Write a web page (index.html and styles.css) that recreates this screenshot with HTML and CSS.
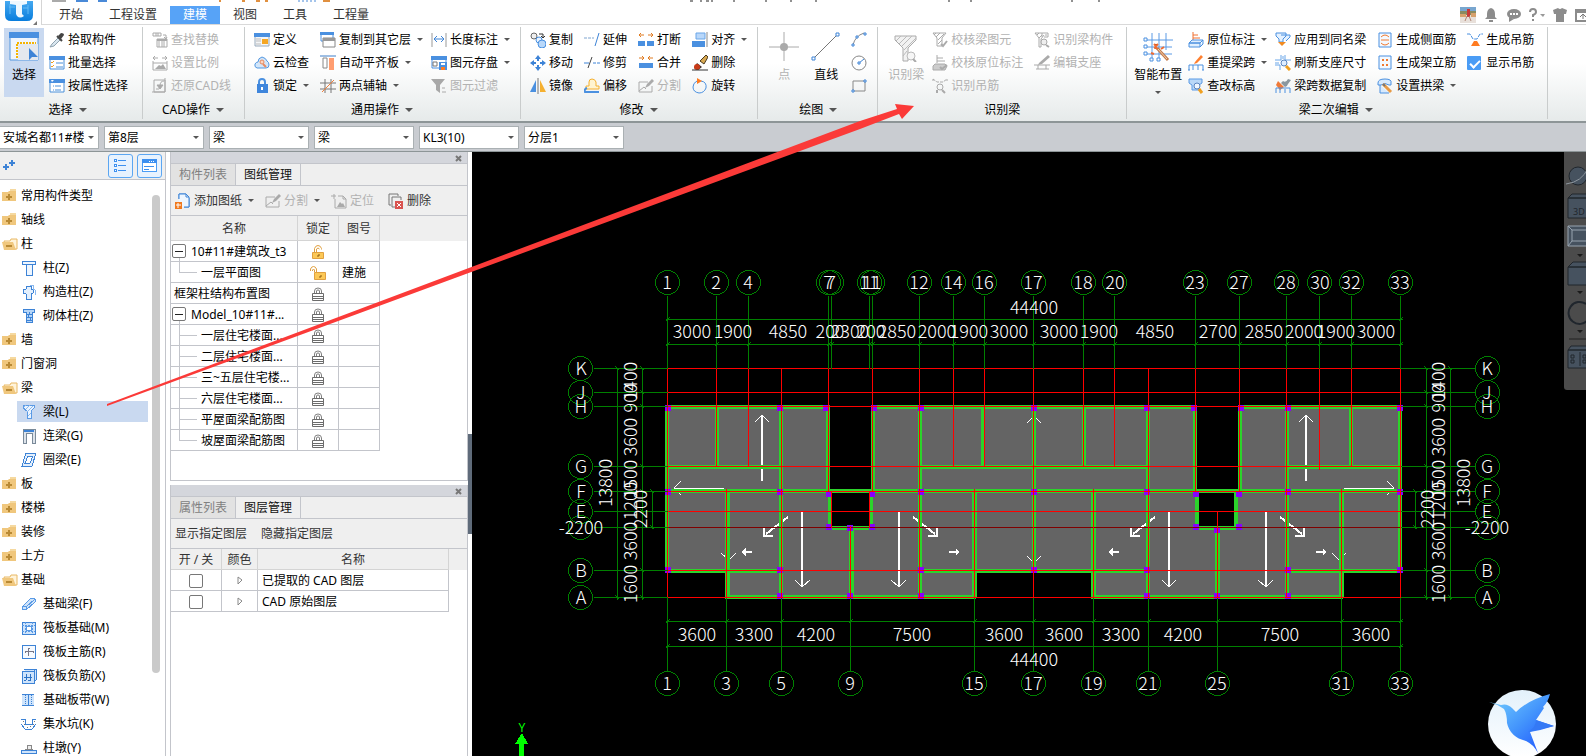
FILE: index.html
```html
<!DOCTYPE html>
<html lang="zh-CN">
<head>
    <meta charset="UTF-8">
    <meta name="viewport" content="width=device-width, initial-scale=1.0">
    <title>安城名都11#楼 - 建模</title>
    <link rel="stylesheet" href="styles.css">
</head>
<body>

<!-- 共用图标 -->
<svg class="symbols" aria-hidden="true">
    <symbol id="folder" viewBox="0 0 16 14">
        <path d="M8 0h6v2H8z" fill="#f5d9a0"/><path d="M0 3h6l1-1h7v10H0z" fill="#f0c77d"/>
        <path d="M7 5v6M4 8h6" stroke="#b98a35" stroke-width="2"/>
    </symbol>
    <symbol id="folder-open" viewBox="0 0 16 14">
        <path d="M2 4h6l1-2h6v10H4z" fill="#fff3d9" stroke="#e8b865"/><path d="M0 5h11l3 8H2z" fill="#f0c77d"/>
        <path d="M4 9h6" stroke="#b98a35" stroke-width="2"/>
    </symbol>
    <symbol id="lock" viewBox="0 0 12 14">
        <path d="M2.5 6V4q0-3 3.5-3t3.5 3v2M4.5 6V4q0-1 1.5-1t1.5 1v2" fill="none" stroke="#808080"/>
        <path d="M.5 6.500h11v7H.5zM1 9.500h10M1 11.500h10" fill="#fff" stroke="#6c6c6c"/>
    </symbol>
    <symbol id="unlock" viewBox="0 0 12 14">
        <path d="M2.500 7V3.500q1-3 3.500-3t3.500 3v1M4.500 7V4q1.500-2 3 0" fill="none" stroke="#e0a040"/>
        <path d="M.5 7.500h11v6H.5z" fill="#fcc856" stroke="#e0a040"/><path d="M7 9v2H5" fill="none" stroke="#8a5a10"/>
    </symbol>
    <symbol id="unlock-open" viewBox="0 0 16 14">
        <path d="M.5 5V3q1-2.500 3-2.500T6.500 3v4M2.500 5V4q1-2 2 0v2" fill="none" stroke="#e0a040"/>
        <path d="M4.500 6.500h11v7h-11z" fill="#fcc856" stroke="#e0a040"/><path d="M11 9v2H9" fill="none" stroke="#8a5a10"/>
    </symbol>
</svg>

<header class="titlebar">
    <button class="app-logo" aria-label="应用菜单">
        <svg width="37" height="24" viewBox="0 0 37 24">
            <defs><linearGradient id="logoFill" x2="0" y2="1"><stop stop-color="#46a9f0"/><stop offset="1" stop-color="#087ddd"/></linearGradient></defs>
            <path d="M5 0h28v14q0 6-6 6H11q-6 0-6-6z" fill="url(#logoFill)"/>
            <path d="M9 6h6M23 7h5M10 3v10M28 4v9" stroke="#63b9f4"/>
            <path d="M10 0h17v3l-5 1v9l2 2q-4 3-7 0l-1-2V4l-6-1z" fill="#eef8ff"/>
            <path d="M37 20v4h-4z" fill="#777"/>
        </svg>
    </button>
    <div class="titlebar-main">
        <svg class="quick-access" width="1060" height="2" viewBox="41 0 1060 2" aria-hidden="true">
            <path d="M51 1h14" stroke="#aaa" stroke-width="2"/>
            <path d="M75 1h12M97 1h9" stroke="#4a8ad8" stroke-width="2"/>
            <path d="M219 0v2M241 1h3M255 1h4M264 1h3M322 1h7" stroke="#e09040" stroke-width="2"/>
            <path d="M298 0v2M302 0v2M306 0v2M310 0v2M314 0v2" stroke="#4a8ad8"/>
            <path d="M689 1h3M699 1h2M705 1h3M711 0v2M733 0v2M765 0v2M790 0v2M815 0v2M947 1h2M970 0v2M1070 1h2M1097 1h2" stroke="#222"/>
        </svg>
        <nav class="tabs">
            <button>开始</button>
            <button>工程设置</button>
            <button class="active">建模</button>
            <button>视图</button>
            <button>工具</button>
            <button>工程量</button>
        </nav>
        <div class="user-tools">
            <svg width="126" height="18" viewBox="1460 5 126 18">
                <path d="M1460 6h16v16h-16z" fill="#e8e0da"/><path d="M1460 6h16v4h-16z" fill="#78a6cf"/><path d="M1460 10h16v4h-16z" fill="#8a8a5f"/>
                <path d="M1467 8h3v8h-3z" fill="#c93838"/><path d="M1460 13h6v3h-6zM1471 12h5v4h-5z" fill="#d7a16c"/><path d="M1467 15l-2 5M1469 15l2 5" stroke="#b08473"/>
                <path d="M1491 7q-4 1-4 6v3l-2 2h12l-2-2v-3q0-5-4-6zM1489 19h4v2h-4z" fill="#8c8c8c"/>
                <ellipse cx="1514" cy="13" rx="7" ry="5" fill="#8c8c8c"/><path d="M1509 16v5l5-3z" fill="#8c8c8c"/>
                <path d="M1510 13h2M1513 13h2M1516 13h2" stroke="#fff" stroke-width="2"/>
                <path d="M1530 11q0-3 3-3t3 3q0 2-3 3v2M1533 18v2" fill="none" stroke="#8c8c8c" stroke-width="2"/>
                <path d="M1540 13h5l-2 3z" fill="#999"/>
                <path d="M1553 9l5-2q2 2 4 0l5 2-1 4h-2v8h-8v-8h-2z" fill="#8c8c8c"/>
                <path d="M1576 9h12v11h-12zM1576 11h12" fill="none" stroke="#8c8c8c" stroke-width="2"/><path d="M1583 18v-4M1580 16l3-3 3 3" fill="none" stroke="#777"/>
            </svg>
        </div>
    </div>
</header>

<section class="ribbon">
    <div class="group group-select">
        <div class="tools">
            <button class="big selected">
                <svg width="30" height="30"><path d="M1 2h28v26H1z" fill="#f0f5fc" stroke="#5598e0"/><path d="M0 0h30v6H0z" fill="#4a90e0"/><path d="M8 11h19M8 12v15" stroke="#f5b400" stroke-width="2" stroke-dasharray="2 1" fill="none"/><path d="M9 12h20v16H9z" fill="#e4e8ee"/><path d="M20 16v12l3-3h6z" fill="#3d83d6"/></svg>
                <span>选择</span>
            </button>
            <div class="col">
                <button><svg viewBox="0 0 16 16"><path d="M3 12l7-7 2 2-7 7-4 1z" fill="#d9e6ef" stroke="#8fa3b0"/><path d="M9 4l3-3q3 0 3 2l-3 4z" fill="#444"/><path d="M8 4l5 5" stroke="#444" stroke-width="2"/></svg><span>拾取构件</span></button>
                <button><svg viewBox="0 0 16 16"><path d="M1 2h14v12H1z" fill="#fff" stroke="#4a90d9"/><path d="M0 1h16v4H0z" fill="#4a90e0"/><path d="M2 7l1 1 2-2M2 11l1 1 2-2" fill="none" stroke="#f0a020"/><path d="M7 8h7M7 12h7" stroke="#4a90d9"/></svg><span>批量选择</span></button>
                <button><svg viewBox="0 0 16 16"><path d="M1 2h14v12H1z" fill="#fff" stroke="#4a90d9"/><path d="M0 1h16v4H0z" fill="#4a90e0"/><path d="M2 2h3L3 4z" fill="#fff"/><path d="M4 8h1M4 12h1M6 8h6M6 12h6" stroke="#4a90d9"/></svg><span>按属性选择</span></button>
            </div>
        </div>
        <div class="group-name has-arrow">选择</div>
    </div>

    <div class="group">
        <div class="tools">
            <div class="col">
                <button disabled><svg viewBox="0 0 16 16"><path d="M1 1h8v3H1zM4 1v3M6 1v3M11 3h3v3M12 5l2 2 1-2M5 7h10v8H5zM7 9v6M10 9v6M12 9v6" fill="none" stroke="#aaa"/><path d="M5 7h10v2H5z" fill="#aaa"/></svg><span>查找替换</span></button>
                <button disabled><svg viewBox="0 0 16 16"><path d="M1 3h5M3 1L1 3l2 2M10 3h5M13 1l2 2-2 2M1 6v9h14V6M1 8h14" fill="none" stroke="#aaa"/><path d="M3 14l4-4 2 1 2-2 3 5z" fill="#aaa"/></svg><span>设置比例</span></button>
                <button disabled><svg viewBox="0 0 16 16"><path d="M2 2h11v12H2zM0 14h13M13 0v14" fill="none" stroke="#aaa"/><path d="M12 3q-4 0-4 5" fill="none" stroke="#aaa"/><path d="M5 7l3 4 3-4zM4 11h3" fill="#aaa" stroke="#aaa"/></svg><span>还原CAD线</span></button>
            </div>
        </div>
        <div class="group-name has-arrow">CAD操作</div>
    </div>

    <div class="group">
        <div class="tools">
            <div class="col">
                <button><svg viewBox="0 0 16 16"><path d="M1 2h14v12H1z" fill="#f4f6f8" stroke="#9ab"/><path d="M0 1h16v4H0z" fill="#4a90e0"/><path d="M2 7h5M2 9h5M2 12h5" stroke="#bbb"/><path d="M8 7h6v5H8z" fill="#f5a623"/></svg><span>定义</span></button>
                <button><svg viewBox="0 0 16 16"><path d="M3 13q-3-1-2-4 1-2 3-2 0-4 4-5 4 1 5 4 2 1 2 4t-3 3z" fill="#d2e6fa" stroke="#5598e0"/><circle cx="8" cy="7" r="2" fill="#fbd5c0" stroke="#e88a60"/><path d="M9 9l3 3" stroke="#e88a60" stroke-width="2"/></svg><span>云检查</span></button>
                <button class="has-arrow"><svg viewBox="0 0 16 16"><path d="M5 7V4q0-3 3-3t3 3v3" fill="none" stroke="#4a90e0" stroke-width="2"/><path d="M3 6h11v9H3z" fill="#3f86dc"/><path d="M8 9v3" stroke="#fff" stroke-width="2"/></svg><span>锁定</span></button>
            </div>
            <div class="col">
                <button class="has-arrow"><svg viewBox="0 0 16 16"><path d="M1 1h12v8H1z" fill="#fff" stroke="#4a90e0"/><path d="M0 0h14v3H0z" fill="#4a90e0"/><path d="M3 6h12v9H3z" fill="#fff" stroke="#888"/><path d="M3 6h12v3H3z" fill="#999"/></svg><span>复制到其它层</span></button>
                <button class="has-arrow"><svg viewBox="0 0 16 16"><path d="M0 1h16" stroke="#3f7fc8"/><path d="M3 3h4v10H3z" fill="#fff" stroke="#888"/><path d="M9 3h5v12H9z" fill="#ff9d70"/></svg><span>自动平齐板</span></button>
                <button class="has-arrow"><svg viewBox="0 0 16 16"><path d="M5 1v14M11 1v14M0 5h16M0 11h16" stroke="#777"/><path d="M2 14L14 2" stroke="#f0803c" stroke-width="1"/></svg><span>两点辅轴</span></button>
            </div>
            <div class="col">
                <button class="has-arrow"><svg viewBox="0 0 16 16"><path d="M1 1v14M15 1v14" stroke="#999"/><path d="M3 7h10M6 4L3 7l3 3M10 4l3 3-3 3" fill="none" stroke="#3d83d6"/></svg><span>长度标注</span></button>
                <button class="has-arrow"><svg viewBox="0 0 16 16"><path d="M1 2h14v11H1z" fill="#fff" stroke="#4a90e0"/><path d="M0 1h16v4H0z" fill="#4a90e0"/><path d="M2 7h4v4H2z" fill="none" stroke="#777"/><path d="M8 7h8v8H8z" fill="#4a90e0"/><path d="M10 8h4v2h-4z" fill="#fff"/><path d="M10 12h4v3h-4z" fill="#ff7b20"/></svg><span>图元存盘</span></button>
                <button disabled><svg viewBox="0 0 16 16"><path d="M0 1h14L9 7v8l-4-3V7z" fill="#a8a8a8"/><path d="M11 10h3M11 14h4" stroke="#aaa"/></svg><span>图元过滤</span></button>
            </div>
        </div>
        <div class="group-name has-arrow">通用操作</div>
    </div>

    <div class="group">
        <div class="tools">
            <div class="col">
                <button><svg viewBox="0 0 16 16"><circle cx="4" cy="4" r="3" fill="#eee" stroke="#666"/><path d="M9 2h4v3M11 4l2 2 2-2" fill="none" stroke="#333"/><circle cx="9" cy="8" r="3" fill="#e8f3ff" stroke="#4a90e0"/><circle cx="12" cy="12" r="4" fill="#b9d8fa" stroke="#4a90e0"/></svg><span>复制</span></button>
                <button><svg viewBox="0 0 16 16"><path d="M8 0l3 4H9v2H7V4H5zM8 16l3-4H9v-2H7v2H5zM0 8l4-3v2h2v2H4v2zM16 8l-4-3v2h-2v2h2v2z" fill="#3d83d6"/></svg><span>移动</span></button>
                <button><svg viewBox="0 0 16 16"><path d="M6 2v12H0z" fill="#4a90e0"/><path d="M10 2v12h6z" fill="#f5b030"/><path d="M8 0v16" stroke="#777"/></svg><span>镜像</span></button>
            </div>
            <div class="col">
                <button><svg viewBox="0 0 16 16"><path d="M0 6h10" stroke="#7fa5d0" stroke-dasharray="3 1"/><path d="M15 1l-4 13" stroke="#3d83d6"/></svg><span>延伸</span></button>
                <button><svg viewBox="0 0 16 16"><path d="M0 8h5" stroke="#3d83d6"/><path d="M9 8h7" stroke="#3d83d6" stroke-dasharray="3 1"/><path d="M8 2L4 13" stroke="#444"/></svg><span>修剪</span></button>
                <button><svg viewBox="0 0 16 16"><path d="M5 8V4q0-3 3-3t4 3v4h3v3H2V8z" fill="#fff4d0" stroke="#f5b030"/><path d="M3 10q-3 1-2 4h14" fill="none" stroke="#4a90e0" stroke-width="2"/></svg><span>偏移</span></button>
            </div>
            <div class="col">
                <button><svg viewBox="0 0 16 16"><path d="M0 9h7v5H0zM9 9h7v5H9z" fill="#4a90e0"/><path d="M1 3h5M3 1L1 3l2 2M10 3h5M13 1l2 2-2 2" fill="none" stroke="#e07b20"/></svg><span>打断</span></button>
                <button><svg viewBox="0 0 16 16"><path d="M1 8h14v5H1z" fill="#4a90e0"/><path d="M1 3h5M4 1l2 2-2 2M10 3h5M12 1l-2 2 2 2" fill="none" stroke="#e07b20"/></svg><span>合并</span></button>
                <button disabled><svg viewBox="0 0 16 16"><path d="M10 4H1v10h13V8M1 13l5-4 2 2" fill="none" stroke="#aaa"/><path d="M7 10l2-4 5-5 2 2-5 5z" fill="#aaa"/></svg><span>分割</span></button>
            </div>
            <div class="col">
                <button class="has-arrow"><svg viewBox="0 0 16 16"><path d="M4 1h9v6H4z" fill="#b8d7fa" stroke="#6aa6e8"/><path d="M0 9h13v6H0z" fill="#4a90e0"/><path d="M15 0v15" stroke="#888"/></svg><span>对齐</span></button>
                <button><svg viewBox="0 0 16 16"><path d="M8 6l6-6 2 2-4 7z" fill="#d8a850" stroke="#493a20"/><path d="M5 8l5 4-4 3-4-2z" fill="#40302a"/><circle cx="5" cy="12" r="3" fill="#c93b18"/><path d="M0 15h16" stroke="#333"/></svg><span>删除</span></button>
                <button><svg viewBox="0 0 16 16"><path d="M9 3q6 1 5 7-2 5-7 5-6-1-6-6 0-4 4-6" fill="none" stroke="#4a90e0"/><path d="M5 0l5 3-5 3z" fill="#ff7b20"/></svg><span>旋转</span></button>
            </div>
        </div>
        <div class="group-name has-arrow">修改</div>
    </div>

    <div class="group group-draw">
        <div class="tools">
            <button class="big" disabled>
                <svg width="30" height="30"><path d="M15 0v29M0 15h30" stroke="#aaa"/><circle cx="15" cy="15" r="4" fill="#aaa"/></svg>
                <span>点</span>
            </button>
            <button class="big">
                <svg width="30" height="30"><path d="M2 27L26 3" stroke="#777"/><path d="M1 25h3v3H1zM25 1h3v3h-3z" fill="#fff" stroke="#3d83d6"/></svg>
                <span>直线</span>
            </button>
            <div class="col">
                <button aria-label="圆弧"><svg viewBox="0 0 16 16"><path d="M2 13Q4 4 13 1" fill="none" stroke="#888"/><path d="M1 12h2v2H1zM5 4h2v2H5zM13 1h2v2h-2z" fill="#fff" stroke="#3d83d6"/></svg></button>
                <button aria-label="圆"><svg viewBox="0 0 16 16"><circle cx="8" cy="8" r="7" fill="none" stroke="#888"/><path d="M8 8l5-4" stroke="#3d83d6"/><path d="M7 7h2v2H7z" fill="#fff" stroke="#3d83d6"/></svg></button>
                <button aria-label="矩形"><svg viewBox="0 0 16 16"><path d="M2 3h12v10H2z" fill="none" stroke="#888"/><path d="M1 12h2v2H1zM13 2h2v2h-2z" fill="#fff" stroke="#3d83d6"/></svg></button>
            </div>
        </div>
        <div class="group-name has-arrow">绘图</div>
    </div>

    <div class="group group-identify">
        <div class="tools">
            <button class="big" disabled>
                <svg width="30" height="30"><path d="M4 4h21v4l-8 8v13h-5V16L4 8z" fill="#f2f2f2" stroke="#aaa"/><path d="M5 9l5-5M8 12l8-8M11 14L21 4M13 18L25 6M12 24l4-5" stroke="#bbb"/><circle cx="20" cy="24" r="4" fill="#f6f6f6" stroke="#bbb"/><path d="M22 27l3 3" stroke="#aaa" stroke-width="2"/></svg>
                <span>识别梁</span>
            </button>
            <div class="col">
                <button disabled><svg viewBox="0 0 16 16"><path d="M1 1h13l-4 5v8H5V6zM2 3l2-2M4 5l4-4M6 8l6-6M6 12l4-4" fill="none" stroke="#aaa"/><path d="M9 12l2 2 4-5" fill="none" stroke="#aaa" stroke-width="2"/></svg><span>校核梁图元</span></button>
                <button disabled><svg viewBox="0 0 16 16"><path d="M5 0v8M5 3h6M5 6h8" stroke="#aaa"/><path d="M3 9h10l2 2-2 4H1v-4z" fill="#ccc" stroke="#aaa"/><path d="M8 12l2 2 5-4" fill="none" stroke="#aaa" stroke-width="2"/></svg><span>校核原位标注</span></button>
                <button disabled><svg viewBox="0 0 16 16"><path d="M1 1l4 3h6l4-3M0 2h2M14 2h2" fill="none" stroke="#aaa" stroke-dasharray="3 1"/><circle cx="8" cy="9" r="3" fill="none" stroke="#aaa"/><path d="M5 15v-3M10 12l3 3" stroke="#aaa" stroke-width="2"/></svg><span>识别吊筋</span></button>
            </div>
            <div class="col">
                <button disabled><svg viewBox="0 0 16 16"><path d="M1 1h13v4h-4M1 1l4 5v9h2V7l3-4M8 1v4M11 3h2M3 3l2-2M5 6l3-3" fill="none" stroke="#aaa"/><circle cx="10" cy="10" r="3" fill="#eee" stroke="#aaa"/><path d="M12 13l3 2" stroke="#aaa" stroke-width="2"/></svg><span>识别梁构件</span></button>
                <button disabled><svg viewBox="0 0 16 16"><path d="M5 8l9-8 2 2-8 7-4 1z" fill="#aaa"/><path d="M0 10h16M2 14h13M4 10v4M12 10v4" stroke="#aaa"/></svg><span>编辑支座</span></button>
            </div>
        </div>
        <div class="group-name">识别梁</div>
    </div>

    <div class="group group-edit">
        <div class="tools">
            <button class="big menu">
                <svg width="30" height="30"><path d="M3 8h27M3 15h26M3 22h26M9 1v25M16 1v25M23 1v17" stroke="#5a9ae5"/><path d="M1 6h3v3H1zM1 13h3v3H1zM1 20h3v3H1zM7 26h3v3H7zM14 26h3v3h-3z" fill="#fff" stroke="#4a90e0"/><path d="M14 16l11 12" stroke="#c47a4a" stroke-width="3"/><path d="M15 17l9 10" stroke="#f5d2ae"/><path d="M11 12l2 2 2-2M11 16l2-1 1 2M18 17l3-2M8 21l3 1" stroke="#f06a30" stroke-width="2"/></svg>
                <span>智能布置</span>
            </button>
            <div class="col">
                <button class="has-arrow"><svg viewBox="0 0 16 16"><path d="M5 0v9M5 3h5M5 6h7" stroke="#f07030"/><path d="M4 8h11l-3 3H1zM1 11h11v4H1zM15 8v4l-3 3" fill="#e0effe" stroke="#4a90e0"/></svg><span>原位标注</span></button>
                <button class="has-arrow"><svg viewBox="0 0 16 16"><path d="M7 7l6-7 2 2-6 6-3 1z" fill="#ff8030"/><path d="M1 15v-5h14v5M5 10v5M10 10v5M0 15h2M14 15h2" fill="none" stroke="#4a90e0"/></svg><span>重提梁跨</span></button>
                <button><svg viewBox="0 0 16 16"><path d="M1 1h13v4l-3 2v5H4V7L1 5z" fill="#b9d8f8" stroke="#5a9ae5"/><circle cx="9" cy="8" r="3" fill="#eef6ff" stroke="#5a85c0"/><path d="M11 11l3 4" stroke="#f0a020" stroke-width="3"/></svg><span>查改标高</span></button>
            </div>
            <div class="col">
                <button><svg viewBox="0 0 16 16"><path d="M1 1h10v3L8 7v3H4V7L1 4zM6 3h9v2l-4 4" fill="#e4f1ff" stroke="#4a90e0"/><path d="M3 10h8l-4 4z" fill="#f08a20"/></svg><span>应用到同名梁</span></button>
                <button><svg viewBox="0 0 16 16"><path d="M6 0v5H0M10 0v5h6M0 10h5v5M8 1v3M0 8h4" fill="none" stroke="#6aa6e8"/><circle cx="9" cy="8" r="3" fill="#dfeeff" stroke="#5a85c0"/><path d="M11 11l4 4" stroke="#f0a020" stroke-width="3"/></svg><span>刷新支座尺寸</span></button>
                <button><svg viewBox="0 0 16 16"><path d="M3 3l6 6-4 3-4-5z" fill="#f07a38"/><path d="M8 3q3 2 5-2l3 1-3 4q-1 3-3 3L6 5z" fill="#8a979f"/><path d="M1 15v-5h14v5M5 11v4M10 11v4" fill="none" stroke="#4a90e0"/></svg><span>梁跨数据复制</span></button>
            </div>
            <div class="col">
                <button><svg viewBox="0 0 16 16"><path d="M2 1h12v14H2z" fill="#f4f9ff" stroke="#4a90e0"/><path d="M4 5q4-4 8 0M4 8h8M4 11q4 4 8 0" fill="none" stroke="#f07a30"/></svg><span>生成侧面筋</span></button>
                <button><svg viewBox="0 0 16 16"><path d="M2 1h12v13H2z" fill="#f4f9ff" stroke="#4a90e0"/><path d="M5 5h2M9 5h2M5 10h2M9 10h2" stroke="#f07a30" stroke-width="2"/></svg><span>生成架立筋</span></button>
                <button class="has-arrow"><svg viewBox="0 0 16 16"><path d="M1 5q0-4 7-4t6 4v2h-2q-4-3-8 0H1zM3 7v8h9" fill="#d8eafd" stroke="#4a90e0"/><path d="M6 6l8 8" stroke="#e79a45" stroke-width="3"/><path d="M6 6l2 2" stroke="#777" stroke-width="2"/></svg><span>设置拱梁</span></button>
            </div>
            <div class="col">
                <button><svg viewBox="0 0 16 16"><path d="M0 2h3l3 5h4l3-5h3" fill="none" stroke="#4a90e0" stroke-dasharray="4 1"/><path d="M7 9h3l3 5H4z" fill="#ff7b20"/></svg><span>生成吊筋</span></button>
                <label class="check"><input type="checkbox" checked><span>显示吊筋</span></label>
            </div>
        </div>
        <div class="group-name has-arrow">梁二次编辑</div>
    </div>
</section>

<section class="selector-bar">
    <div class="picker"><select aria-label="工程"><option>安城名都11#楼</option></select></div>
    <div class="picker"><select aria-label="楼层"><option>第8层</option></select></div>
    <div class="picker"><select aria-label="构件分类"><option>梁</option></select></div>
    <div class="picker"><select aria-label="构件类型"><option>梁</option></select></div>
    <div class="picker"><select aria-label="构件名称"><option>KL3(10)</option></select></div>
    <div class="picker"><select aria-label="分层"><option>分层1</option></select></div>
</section>

<main class="workspace">
    <!-- 构件导航树 -->
    <aside class="navigator">
        <div class="navigator-head">
            <button class="plus" aria-label="展开"><svg width="14" height="12"><path d="M0 7h6M3 4v6M6 3h6M9 0v6" stroke="#3d83d6" stroke-width="2"/></svg></button>
            <div class="view-switch">
                <button aria-label="列表"><svg width="15" height="15"><path d="M1 1h2v2H1zM1 6h2v2H1zM1 11h2v2H1z" fill="#fff" stroke="#3d90f0"/><path d="M5 2h8M5 7h8M5 12h8" stroke="#3d90f0"/></svg></button>
                <button aria-label="面板"><svg width="15" height="15"><path d="M0 1h14v12H0z" fill="#fff" stroke="#4a9cf5"/><path d="M0 1h15v4H0z" fill="#3d90f0"/><path d="M7 3h1M9 3h1M11 3h1" stroke="#fff"/><path d="M2 8h10M2 11h5" stroke="#3d90f0"/></svg></button>
            </div>
        </div>
        <div class="tree-wrap">
            <ul class="tree">
                <li><a href="#"><svg><use href="#folder"/></svg>常用构件类型</a></li>
                <li><a href="#"><svg><use href="#folder"/></svg>轴线</a></li>
                <li><a href="#"><svg><use href="#folder-open"/></svg>柱</a></li>
                <li class="leaf"><a href="#"><svg viewBox="0 0 16 16"><path d="M1 1h13v3h-3v11H5V4H1zM1 4h13M5 4v3" fill="#eef6ff" stroke="#3d83d6"/></svg>柱(Z)</a></li>
                <li class="leaf"><a href="#"><svg viewBox="0 0 16 16"><path d="M9 1h3v4l2 1v5" fill="none" stroke="#8ab8ee"/><path d="M5 2h5v3l2 1v3l-2 1v5H5v-5l-3-1V6l3-1z" fill="#e4f0fd" stroke="#3d83d6"/></svg>构造柱(Z)</a></li>
                <li class="leaf"><a href="#"><svg viewBox="0 0 16 16"><path d="M2 1h11v3h-2v10H5V4H2z" fill="#b6d5f7" stroke="#3d83d6"/><path d="M5 6h6M5 9h6M5 12h6M8 4v2M7 6v3M9 9v3" stroke="#3d83d6"/></svg>砌体柱(Z)</a></li>
                <li><a href="#"><svg><use href="#folder"/></svg>墙</a></li>
                <li><a href="#"><svg><use href="#folder"/></svg>门窗洞</a></li>
                <li><a href="#"><svg><use href="#folder-open"/></svg>梁</a></li>
                <li class="leaf current"><a href="#"><svg viewBox="0 0 16 16"><path d="M2 1h11v3l-3 3v7H6V7L2 4z" fill="#eaf4ff" stroke="#5a9ae5"/><path d="M3 3l2-2M5 5l4-4M6 8l6-6M7 12l3-3" stroke="#8ab8ee"/></svg>梁(L)</a></li>
                <li class="leaf"><a href="#"><svg viewBox="0 0 16 16"><path d="M2 15V1h12v14h-3V5H5v10z" fill="#dde3ea" stroke="#7a8a99"/><path d="M3 3h10" stroke="#3d83d6" stroke-width="2"/></svg>连梁(G)</a></li>
                <li class="leaf"><a href="#"><svg viewBox="0 0 16 16"><path d="M5 1h10l-4 13H1zM7 4h5l-3 7H4z" fill="#e4f0fd" fill-rule="evenodd" stroke="#3d83d6"/></svg>圈梁(E)</a></li>
                <li><a href="#"><svg><use href="#folder"/></svg>板</a></li>
                <li><a href="#"><svg><use href="#folder"/></svg>楼梯</a></li>
                <li><a href="#"><svg><use href="#folder"/></svg>装修</a></li>
                <li><a href="#"><svg><use href="#folder"/></svg>土方</a></li>
                <li><a href="#"><svg><use href="#folder-open"/></svg>基础</a></li>
                <li class="leaf"><a href="#"><svg viewBox="0 0 16 16"><path d="M2 10l8-8 4 1v3l-9 8-4-1zM2 10l3 1v3M5 11l9-8" fill="#cfe4fb" stroke="#5a9ae5"/></svg>基础梁(F)</a></li>
                <li class="leaf"><a href="#"><svg viewBox="0 0 16 16"><path d="M1 2h13v12H1z" fill="#cfe4fb" stroke="#3d83d6"/><path d="M4 2v12M11 2v12M1 5h13M1 11h13" stroke="#5a9ae5" stroke-dasharray="2 1"/><path d="M5 6h5v4H5z" fill="#fff" stroke="#5a9ae5"/></svg>筏板基础(M)</a></li>
                <li class="leaf"><a href="#"><svg viewBox="0 0 16 16"><path d="M1 1h13v13H1z" fill="#f6faff" stroke="#3d83d6"/><path d="M9 4H7v8M4 9V7h8v2" fill="none" stroke="#778"/></svg>筏板主筋(R)</a></li>
                <li class="leaf"><a href="#"><svg viewBox="0 0 16 16"><path d="M3 1h12v11l-2 2M1 3h12v12H1zM13 3l2-2" fill="#cfe4fb" stroke="#3d83d6"/><path d="M3 9h8M5 6v6M9 6v6H7M3 12h2" fill="none" stroke="#2d73c6"/></svg>筏板负筋(X)</a></li>
                <li class="leaf"><a href="#"><svg viewBox="0 0 16 16"><path d="M1 2h12v11H1z" fill="#cfe4fb"/><path d="M1 2h12M1 13h12M7 2v11" stroke="#3d83d6"/><path d="M4 3v9M10 3v9" stroke="#3d83d6" stroke-dasharray="1 1"/></svg>基础板带(W)</a></li>
                <li class="leaf"><a href="#"><svg viewBox="0 0 16 16"><path d="M0 3h4v5h7V3h4M0 8l4 5h7l4-5" fill="none" stroke="#3d83d6"/><path d="M2 5h1M13 5h1M3 8h1M6 11h1M9 10h1M12 8h1" stroke="#777"/></svg>集水坑(K)</a></li>
                <li class="leaf"><a href="#"><svg viewBox="0 0 16 16"><path d="M6 5h4v4H6zM4 9h8" fill="#eee" stroke="#888"/><path d="M0 10h15v3H0z" fill="#cfe4fb" stroke="#3d83d6"/></svg>柱墩(Y)</a></li>
            </ul>
            <div class="scrollbar"></div>
        </div>
    </aside>

    <!-- 图纸 / 图层面板 -->
    <div class="docks">
        <section class="dock dock-drawings">
            <div class="dock-title"><button aria-label="关闭"><svg width="7" height="7"><path d="M1 1l5 5M6 1L1 6" stroke="#777" stroke-width="2"/></svg></button></div>
            <div class="dock-tabs"><button>构件列表</button><button class="active">图纸管理</button></div>
            <div class="dock-tools">
                <button class="has-arrow"><svg viewBox="0 0 16 16"><path d="M4 6V1h7M14 5v9H9M11 1v3h3" fill="none" stroke="#3d83d6"/><path d="M4 1h7l3 3v10H4z" fill="#eef6ff"/><path d="M4 6V1h7l3 3v10H9M11 1v3h3" fill="none" stroke="#3d83d6"/><path d="M0 9h7v7H0z" fill="#f07a20"/><path d="M3 10v5M1 12h5" stroke="#fff"/></svg><span>添加图纸</span></button>
                <button class="has-arrow" disabled><svg viewBox="0 0 16 16"><path d="M10 4H1v10h13V8M1 13l5-4 2 2" fill="none" stroke="#aaa"/><path d="M7 10l2-4 5-5 2 2-5 5z" fill="#aaa"/></svg><span>分割</span></button>
                <button disabled><svg viewBox="0 0 16 16"><path d="M4 6v9h11V6l-3-3H7M12 3v3h3" fill="#eee" stroke="#aaa"/><path d="M0 3h5M3 1v5" stroke="#aaa"/><path d="M6 14l3-5 2 2 1-1 2 4z" fill="#aaa"/></svg><span>定位</span></button>
                <button class="wide"><svg viewBox="0 0 16 16"><path d="M3 12H1V1h9v2M13 7V4H4v10h3" fill="none" stroke="#777"/><path d="M7 8h8v8H7z" fill="#d9534f"/><path d="M9 10l4 4M13 10l-4 4" stroke="#fff"/></svg><span>删除</span></button>
            </div>
            <div class="table-wrap">
                <table class="drawings">
                    <thead><tr><th>名称</th><th>锁定</th><th>图号</th></tr></thead>
                    <tbody>
                        <tr><td><div class="node"><i class="toggle"></i>10#11#建筑改_t3</div></td><td><svg><use href="#unlock"/></svg></td><td></td></tr>
                        <tr><td><div class="node"><i class="branch last"></i>一层平面图</div></td><td><svg class="open"><use href="#unlock-open"/></svg></td><td>建施</td></tr>
                        <tr><td><div class="node plain">框架柱结构布置图</div></td><td><svg><use href="#lock"/></svg></td><td></td></tr>
                        <tr><td><div class="node"><i class="toggle"></i>Model_10#11#...</div></td><td><svg><use href="#lock"/></svg></td><td></td></tr>
                        <tr><td><div class="node"><i class="branch"></i>一层住宅楼面...</div></td><td><svg><use href="#lock"/></svg></td><td></td></tr>
                        <tr><td><div class="node"><i class="branch"></i>二层住宅楼面...</div></td><td><svg><use href="#lock"/></svg></td><td></td></tr>
                        <tr><td><div class="node"><i class="branch"></i>三~五层住宅楼...</div></td><td><svg><use href="#lock"/></svg></td><td></td></tr>
                        <tr><td><div class="node"><i class="branch"></i>六层住宅楼面...</div></td><td><svg><use href="#lock"/></svg></td><td></td></tr>
                        <tr><td><div class="node"><i class="branch"></i>平屋面梁配筋图</div></td><td><svg><use href="#lock"/></svg></td><td></td></tr>
                        <tr><td><div class="node"><i class="branch last"></i>坡屋面梁配筋图</div></td><td><svg><use href="#lock"/></svg></td><td></td></tr>
                    </tbody>
                </table>
            </div>
        </section>

        <section class="dock dock-layers">
            <div class="dock-title"><button aria-label="关闭"><svg width="7" height="7"><path d="M1 1l5 5M6 1L1 6" stroke="#777" stroke-width="2"/></svg></button></div>
            <div class="dock-tabs"><button>属性列表</button><button class="active">图层管理</button></div>
            <div class="dock-tools text-only"><button>显示指定图层</button><button>隐藏指定图层</button></div>
            <div class="table-wrap">
                <table class="layers">
                    <thead><tr><th>开 / 关</th><th>颜色</th><th>名称</th></tr></thead>
                    <tbody>
                        <tr><td><input type="checkbox" aria-label="已提取的 CAD 图层"></td><td><svg width="6" height="9"><path d="M1 1v7l4-4z" fill="none" stroke="#888"/></svg></td><td>已提取的 CAD 图层</td></tr>
                        <tr><td><input type="checkbox" aria-label="CAD 原始图层"></td><td><svg width="6" height="9"><path d="M1 1v7l4-4z" fill="none" stroke="#888"/></svg></td><td>CAD 原始图层</td></tr>
                    </tbody>
                </table>
            </div>
        </section>
    </div>

    <div class="splitter"><button aria-label="收起"></button></div>

    <!-- 绘图区 -->
    <div class="canvas">
        <svg class="plan" viewBox="472 152 1114 604" preserveAspectRatio="xMinYMin meet">
            <g class="slab">
                <path d="M667 406h161v86h-161zM872 406h323v86H872zM1239 406h161v86h-161z"/>
                <path d="M667 491h162v36h42v-36h326v36h40v-36h163v80h-59v27h-248v-27H974v27H727v-27h-60z"/>
            </g>
            <g class="flow">
                <path class="bold" d="M762 481v-66M1306 481v-66M802 512v74M899 512v74M1169 512v74M1266 512v74"/>
                <path d="M755 422l7-7 7 7M1299 422l7-7 7 7M795 580l7 7 8-7M891 580l8 7 7-7M1162 580l7 7 7-7M1258 580l8 7 7-7"/>
                <path d="M724 488h-50M681 481l-7 7 7 7M1344 488h50M1387 481l7 7-7 7"/>
                <path d="M729 499v61M721 553l8 7 7-7M1339 499v61M1332 553l7 7 7-7M1027 423l7-7 7 7M1027 556l7 7 7-7"/>
                <path class="bold" d="M788 517l-22 17M764 527v9h9M913 517l22 17M937 527v9h-9M1155 517l-22 17M1131 527v9h9M1280 517l22 17M1304 527v9h-9"/>
                <path class="bold" d="M752 552h-8M949 552h8M1119 552h-8M1316 552h8"/>
                <path class="tip" d="M745 549l-3 3 3 3zM956 549l3 3-3 3zM1112 549l-3 3 3 3zM1323 549l3 3-3 3z"/>
            </g>
            <g class="beams">
                <path d="M667 407h163M872 407h325M1239 407h163M667 467h115M919 467h230M1286 467h115M665 491h737M828 528h45M1195 528h43M665 571h117M919 571h230M1286 571h116M725 597h251M1091 597h252"/>
                <path d="M667 405v166M717 407v60M781 405v193M828 405v88M830 491v38M873 405v88M871 491v38M920 405v193M983 407v60M1034 405v167M1084 407v60M1148 405v193M1195 405v88M1197 491v38M1240 405v88M1236 491v38M1287 405v193M1351 407v60M1400 405v167"/>
                <path class="thick" d="M727 489v108M851 527v71M974 489v108M1093 489v108M1217 527v71M1341 489v108"/>
            </g>
            <g class="marks">
                <path d="M665 405h6v6h-6zM777 405h6v6h-6zM823 405h6v6h-6zM871 405h6v6h-6zM918 405h6v6h-6zM1031 405h6v6h-6zM1144 405h6v6h-6zM1191 405h6v6h-6zM1238 405h6v6h-6zM1285 405h6v6h-6zM1397 405h6v6h-6z"/>
                <path d="M665 489h6v6h-6zM777 489h6v6h-6zM826 491h6v6h-6zM869 491h6v6h-6zM918 489h6v6h-6zM1031 489h6v6h-6zM1144 489h6v6h-6zM1193 491h6v6h-6zM1236 491h6v6h-6zM1285 489h6v6h-6zM1397 489h6v6h-6z"/>
                <path d="M826 524h6v6h-6zM869 524h6v6h-6zM847 525h6v6h-6zM1193 524h6v6h-6zM1236 524h6v6h-6zM1214 527h6v6h-6z"/>
                <path d="M665 567h6v6h-6zM777 567h6v6h-6zM918 567h6v6h-6zM1031 567h6v6h-6zM1144 567h6v6h-6zM1285 567h6v6h-6zM1397 567h6v6h-6zM777 593h6v6h-6zM847 593h6v6h-6zM918 593h6v6h-6zM1144 593h6v6h-6zM1214 593h6v6h-6zM1285 593h6v6h-6z"/>
            </g>
            <g transform="translate(.5 .5)">
                <path class="axis-faint" d="M667 527h733"/>
                <path class="axis" d="M667 368h733M667 392h733M667 406h733M667 466h733M667 491h733M667 511h733M667 570h733M667 597h733"/>
                <path class="axis" d="M667 368v229M716 368v98M748 368v98M781 368v229M828 368v123M831 491v36M869 491v36M872 368v123M919 368v229M953 368v98M984 368v98M1033 368v229M1083 368v98M1114 368v98M1148 368v229M1195 368v123M1239 368v123M1286 368v229M1319 368v101M1351 368v98M1400 368v229M726 488v109M850 525v72M974 488v109M1093 488v109M1217 511v86M1341 488v109"/>
                <path class="guide" d="M667 295v73M716 295v73M748 295v73M828 295v73M831 295v73M869 295v73M872 295v73M919 295v73M953 295v73M984 295v73M1033 295v73M1083 295v73M1114 295v73M1195 295v73M1239 295v73M1286 295v73M1319 295v73M1351 295v73M1400 295v73"/>
                <path class="guide" d="M667 597v74M726 597v74M781 597v74M850 597v74M974 597v74M1033 597v74M1093 597v74M1148 597v74M1217 597v74M1341 597v74M1400 597v74"/>
                <path class="guide" d="M593 368h74M593 392h74M593 406h74M593 466h74M593 491h74M593 511h74M593 527h74M593 570h74M593 597h74M1400 368h75M1400 392h75M1400 406h75M1400 466h75M1400 491h75M1400 511h75M1400 527h75M1400 570h75M1400 597h75"/>
                <path class="guide" d="M665 319h737M665 344h737M665 621h737M665 646h737M617 367v232M642 367v232M652 490v38M1415 490v38M1426 367v232M1450 367v232"/>
                <path class="guide" d="M665 321l4-4M1398 321l4-4M665 346l4-4M714 346l4-4M746 346l4-4M826 346l4-4M829 346l4-4M867 346l4-4M870 346l4-4M917 346l4-4M951 346l4-4M982 346l4-4M1031 346l4-4M1081 346l4-4M1112 346l4-4M1193 346l4-4M1237 346l4-4M1284 346l4-4M1317 346l4-4M1349 346l4-4M1398 346l4-4"/>
                <path class="guide" d="M665 623l4-4M724 623l4-4M779 623l4-4M848 623l4-4M972 623l4-4M1031 623l4-4M1091 623l4-4M1146 623l4-4M1215 623l4-4M1339 623l4-4M1398 623l4-4M665 648l4-4M1398 648l4-4"/>
                <path class="guide" d="M615 366l4 4M615 595l4 4M640 366l4 4M640 390l4 4M640 404l4 4M640 464l4 4M640 489l4 4M640 509l4 4M640 568l4 4M640 595l4 4M650 489l4 4M650 525l4 4M1424 366l4 4M1424 390l4 4M1424 404l4 4M1424 464l4 4M1424 489l4 4M1424 509l4 4M1424 568l4 4M1424 595l4 4M1448 366l4 4M1448 595l4 4M1413 489l4 4M1413 525l4 4"/>
                <g class="bubbles">
                    <circle cx="667" cy="282" r="12"/><circle cx="716" cy="282" r="12"/><circle cx="748" cy="282" r="12"/><circle cx="828" cy="282" r="12"/><circle cx="831" cy="282" r="12"/><circle cx="869" cy="282" r="12"/><circle cx="872" cy="282" r="12"/><circle cx="919" cy="282" r="12"/><circle cx="953" cy="282" r="12"/><circle cx="984" cy="282" r="12"/><circle cx="1033" cy="282" r="12"/><circle cx="1083" cy="282" r="12"/><circle cx="1114" cy="282" r="12"/><circle cx="1195" cy="282" r="12"/><circle cx="1239" cy="282" r="12"/><circle cx="1286" cy="282" r="12"/><circle cx="1319" cy="282" r="12"/><circle cx="1351" cy="282" r="12"/><circle cx="1400" cy="282" r="12"/>
                    <circle cx="667" cy="683" r="12"/><circle cx="726" cy="683" r="12"/><circle cx="781" cy="683" r="12"/><circle cx="850" cy="683" r="12"/><circle cx="974" cy="683" r="12"/><circle cx="1033" cy="683" r="12"/><circle cx="1093" cy="683" r="12"/><circle cx="1148" cy="683" r="12"/><circle cx="1217" cy="683" r="12"/><circle cx="1341" cy="683" r="12"/><circle cx="1400" cy="683" r="12"/>
                    <circle cx="580" cy="368" r="12"/><circle cx="580" cy="392" r="12"/><circle cx="580" cy="406" r="12"/><circle cx="580" cy="466" r="12"/><circle cx="580" cy="491" r="12"/><circle cx="580" cy="511" r="12"/><circle cx="580" cy="527" r="12"/><circle cx="580" cy="570" r="12"/><circle cx="580" cy="597" r="12"/>
                    <circle cx="1487" cy="368" r="12"/><circle cx="1487" cy="392" r="12"/><circle cx="1487" cy="406" r="12"/><circle cx="1487" cy="466" r="12"/><circle cx="1487" cy="491" r="12"/><circle cx="1487" cy="511" r="12"/><circle cx="1487" cy="527" r="12"/><circle cx="1487" cy="570" r="12"/><circle cx="1487" cy="597" r="12"/>
                </g>
            </g>
            <g class="labels">
                <text x="667" y="289">1</text><text x="716" y="289">2</text><text x="748" y="289">4</text><text x="828" y="289">7</text><text x="831" y="289">7</text><text x="869" y="289">11</text><text x="872" y="289">11</text><text x="919" y="289">12</text><text x="953" y="289">14</text><text x="984" y="289">16</text><text x="1033" y="289">17</text><text x="1083" y="289">18</text><text x="1115" y="289">20</text><text x="1195" y="289">23</text><text x="1239" y="289">27</text><text x="1286" y="289">28</text><text x="1320" y="289">30</text><text x="1351" y="289">32</text><text x="1400" y="289">33</text>
                <text x="1034" y="314">44400</text>
                <text x="692" y="338">3000</text><text x="733" y="338">1900</text><text x="788" y="338">4850</text><text x="830" y="338">200</text><text x="850" y="338">2300</text><text x="871" y="338">200</text><text x="897" y="338">2850</text><text x="937" y="338">2000</text><text x="969" y="338">1900</text><text x="1009" y="338">3000</text><text x="1059" y="338">3000</text><text x="1099" y="338">1900</text><text x="1155" y="338">4850</text><text x="1218" y="338">2700</text><text x="1264" y="338">2850</text><text x="1304" y="338">2000</text><text x="1336" y="338">1900</text><text x="1376" y="338">3000</text>
                <text x="697" y="641">3600</text><text x="754" y="641">3300</text><text x="816" y="641">4200</text><text x="912" y="641">7500</text><text x="1004" y="641">3600</text><text x="1064" y="641">3600</text><text x="1121" y="641">3300</text><text x="1183" y="641">4200</text><text x="1280" y="641">7500</text><text x="1371" y="641">3600</text>
                <text x="1034" y="666">44400</text>
                <text x="667" y="690">1</text><text x="726" y="690">3</text><text x="781" y="690">5</text><text x="850" y="690">9</text><text x="974" y="690">15</text><text x="1033" y="690">17</text><text x="1093" y="690">19</text><text x="1148" y="690">21</text><text x="1217" y="690">25</text><text x="1341" y="690">31</text><text x="1400" y="690">33</text>
                <text x="581" y="375">K</text><text x="581" y="399">J</text><text x="581" y="413">H</text><text x="581" y="473">G</text><text x="581" y="498">F</text><text x="581" y="518">E</text><text x="581" y="534">-2200</text><text x="581" y="577">B</text><text x="581" y="604">A</text>
                <text x="1487" y="375">K</text><text x="1487" y="399">J</text><text x="1487" y="413">H</text><text x="1487" y="473">G</text><text x="1487" y="498">F</text><text x="1487" y="518">E</text><text x="1487" y="534">-2200</text><text x="1487" y="577">B</text><text x="1487" y="604">A</text>
                <g transform="translate(637 0) rotate(-90)">
                    <text x="-381">1400</text><text x="-398">900</text><text x="-437">3600</text><text x="-479">1500</text><text x="-501">1200</text><text x="-541">3600</text><text x="-584">1600</text>
                    <text x="-483" y="-25">13800</text><text x="-509" y="10">2200</text>
                </g>
                <g transform="translate(1445 0) rotate(-90)">
                    <text x="-381">1400</text><text x="-398">900</text><text x="-437">3600</text><text x="-479">1500</text><text x="-501">1200</text><text x="-541">3600</text><text x="-584">1600</text>
                    <text x="-483" y="25">13800</text><text x="-509" y="-11">2200</text>
                </g>
            </g>
            <g class="ucs"><path d="M522 733l6 11h-4v12h-5v-12h-4z"/><text x="522" y="732">Y</text></g>
        </svg>

        <div class="view-bar">
            <svg width="22" height="238" viewBox="1564 152 22 238">
                <g fill="#46525f" stroke="#20262d">
                    <circle cx="1578" cy="176" r="9"/><path d="M1566 184q16-2 22-16" fill="none" stroke="#8d969e"/>
                    <path d="M1568 198l4-4h16v4zM1568 198h20v20h-20z"/>
                    <path d="M1568 226h20v20h-20zM1572 230h16v11h-16zM1568 226l4 4M1568 246l4-5" stroke="#98a4b0"/>
                    <path d="M1568 267l5-5h15v5zM1568 267h20v18h-20z"/>
                    <path d="M1586 304a11 11 0 1 0 2 16" fill="none" stroke-width="2"/>
                    <path d="M1568 350l3-4h17v4zM1568 350h20v18h-20z"/><path d="M1571 355h3v3h-3zM1571 360h3v3h-3zM1580 352v14M1583 355h3v3h-3zM1583 360h3v3h-3z" fill="none"/>
                </g>
                <path d="M1577 254h6l-3 3zM1577 291h6l-3 3zM1577 330h6l-3 3z" fill="#1a1a1a"/><path d="M1569 339h17" stroke="#222"/>
                <text x="1573" y="215">3D</text>
            </svg>
        </div>

        <svg class="bird" width="74" height="76" viewBox="1486 680 74 76">
            <defs>
                <linearGradient id="birdBack" x2="0" y2="1"><stop stop-color="#e3f1fb"/><stop offset="1" stop-color="#fff"/></linearGradient>
                <linearGradient id="birdBody" x2="1" y2="1"><stop stop-color="#78d4ff"/><stop offset=".5" stop-color="#4394fc"/><stop offset="1" stop-color="#1749ff"/></linearGradient>
            </defs>
            <circle cx="1523" cy="724" r="34" fill="url(#birdBack)"/>
            <path d="M1490 702l12 3q6-2 11 3 3 3 4 4 12-12 34-18-2 8-7 13l1 1-8 12 18 6q-12 4-24 6l8 21q-5-9-12-12-16-4-19-18 0-9-3-14-7-5-15-7z" fill="url(#birdBody)"/>
            <path d="M1537 720q0 7-8 12l26-6z" fill="#3479f5"/>
        </svg>
    </div>
</main>

<!-- 操作指引箭头 -->
<svg class="pointer" width="920" height="410" aria-hidden="true"><path d="M107 404L860 121l37-12-2-5 19 2-12 13-3-5-39 15-753 277z"/></svg>

</body>
</html>
```
FILE: styles.css
```css
:root {
    --blue: #4a90e0;
    --line: #c3c5cb;
    --panel: #efefef;
    --disabled: #b2b2b2;
}

* {
    box-sizing: border-box;
}

body {
    margin: 0;
    height: 100vh;
    display: flex;
    flex-direction: column;
    overflow: hidden;
    background: #fff;
    color: #000;
    font-family: "Noto Sans", "Noto Sans CJK SC", sans-serif;
    font-size: 12px;
    line-height: 16px;
}

button,
select,
input {
    font: inherit;
    color: inherit;
}

button {
    padding: 0;
    border: 0;
    background: none;
    white-space: nowrap;
}

button:disabled {
    color: var(--disabled);
}

svg {
    display: block;
    flex: none;
}

.symbols {
    position: absolute;
    width: 0;
    height: 0;
}

/* --- 标题栏 --- */
.titlebar {
    display: flex;
    height: 25px;
    flex: none;
}

.titlebar-main {
    position: relative;
    flex: 1;
    display: flex;
    align-items: flex-end;
    margin-left: 4px;
    padding-left: 4px;
    border-left: 1px solid #d5d5d5;
    border-bottom: 1px solid #d9d9d9;
}

.quick-access {
    position: absolute;
    top: 0;
    left: 0;
}

.tabs {
    display: flex;
}

.tabs button {
    height: 18px;
    padding: 0 13px;
    color: #333;
}

.tabs .active {
    background: #57a3f7;
    color: #fff;
}

.user-tools {
    margin-left: auto;
}

/* --- 功能区 --- */
.ribbon {
    display: flex;
    flex: none;
    height: 98px;
    padding-top: 2px;
    border-bottom: 2px solid #8d9597;
    background: linear-gradient(#fff 40%, #e6eaea);
}

.group {
    display: flex;
    flex-direction: column;
    flex: none;
    height: 92px;
    padding: 1px 10px 0 9px;
    border-right: 1px solid #c9cccc;
}

.group-select {
    padding-left: 4px;
    padding-right: 11px;
}

.group-draw {
    padding-left: 11px;
}

.group-identify {
    padding-left: 10px;
}

.group-edit {
    padding-left: 7px;
}

.tools {
    display: flex;
    flex: none;
    gap: 8px;
}

.col button,
.col .check {
    display: flex;
    align-items: center;
    gap: 3px;
    height: 23px;
    padding-right: 3px;
}

.col svg {
    width: 16px;
    height: 16px;
}

.has-arrow::after {
    content: "";
    width: 0;
    margin-left: 3px;
    border: 3px solid transparent;
    border-top-color: #555;
    border-bottom-width: 0;
}

.col .has-arrow {
    padding-right: 0;
}

.big {
    display: flex;
    flex-direction: column;
    align-items: center;
    gap: 5px;
    height: 69px;
    padding-top: 4px;
    align-self: flex-start;
}

.group-select .tools {
    gap: 5px;
}

.group-draw .tools {
    gap: 10px;
}

.group-draw .big + .big {
    margin-left: 2px;
}

.group-draw .col button {
    padding: 0;
}

.group-edit .tools .big {
    margin-right: -2px;
}

.big.selected {
    width: 40px;
    background: #c9d9f0;
}

.big.menu::after {
    content: "";
    margin-top: 3px;
    border: 3px solid transparent;
    border-top-color: #555;
    border-bottom-width: 0;
}

.group-name {
    display: flex;
    flex: none;
    align-items: center;
    justify-content: center;
    gap: 3px;
    height: 26px;
}

.group-name.has-arrow::after {
    border-width: 4px 4px 0;
}

.check input {
    appearance: none;
    position: relative;
    width: 14px;
    height: 14px;
    margin: 0 2px 0 0;
    border-radius: 1px;
    background: #4a9cf5;
}

.check input::after {
    content: "";
    position: absolute;
    left: 5px;
    top: 2px;
    width: 4px;
    height: 8px;
    border: solid #fff;
    border-width: 0 2px 2px 0;
    transform: rotate(45deg);
}

/* --- 楼层与构件切换 --- */
.selector-bar {
    display: flex;
    gap: 5px;
    flex: none;
    height: 29px;
    padding: 3px 0;
    margin-left: -1px;
    background: #c9ccd1;
    border-bottom: 1px solid #8d9597;
}

.picker {
    position: relative;
    width: 100px;
    height: 23px;
}

.picker select {
    appearance: none;
    width: 100%;
    height: 100%;
    padding: 0 14px 0 3px;
    border: 1px solid #aab0b3;
    border-radius: 0;
    background: #fff;
}

.picker::after {
    content: "";
    position: absolute;
    right: 5px;
    top: 10px;
    border: 3px solid transparent;
    border-top-color: #555;
    border-bottom-width: 0;
}

/* --- 工作区 --- */
.workspace {
    flex: 1;
    min-height: 0;
    display: flex;
}

.navigator {
    width: 166px;
    flex: none;
    display: flex;
    flex-direction: column;
    border-right: 1px solid var(--line);
}

.navigator-head {
    display: flex;
    justify-content: space-between;
    align-items: center;
    height: 28px;
    flex: none;
    padding: 0 3px;
    background: var(--panel);
    border-bottom: 1px solid var(--line);
}

.view-switch {
    display: flex;
    gap: 4px;
}

.view-switch button {
    display: grid;
    place-items: center;
    width: 25px;
    height: 24px;
    border: 1px solid #5ba6f2;
    border-radius: 3px;
    background: #e7f2fe;
}

.view-switch svg,
.plus svg {
    shape-rendering: crispEdges;
}

.tree-wrap {
    position: relative;
    flex: 1;
    min-height: 0;
    overflow: hidden;
}

.tree {
    margin: 0;
    padding: 4px 0 0;
    list-style: none;
}

.tree li {
    height: 24px;
    padding: 1px 17px 2px 0;
}

.tree a {
    display: flex;
    align-items: center;
    gap: 5px;
    height: 21px;
    padding-left: 2px;
    color: #000;
    text-decoration: none;
    white-space: nowrap;
}

.tree svg {
    width: 16px;
    height: 14px;
    margin-right: -2px;
}

.tree .leaf a {
    margin-left: 17px;
    padding-left: 4px;
    gap: 6px;
}

.tree .leaf svg {
    height: 16px;
    margin: 0;
    shape-rendering: crispEdges;
}

.tree .current a {
    background: #c9d9f0;
}

.scrollbar {
    position: absolute;
    top: 15px;
    right: 5px;
    width: 8px;
    height: 83%;
    border-radius: 4px;
    background: #cacaca;
}

/* --- 停靠面板 --- */
.docks {
    width: 298px;
    margin-left: 4px;
    flex: none;
    display: flex;
    flex-direction: column;
    gap: 4px;
}

.dock {
    border: 1px solid var(--line);
    border-top: 0;
}

.dock-drawings {
    flex: 0 0 329px;
}

.dock-layers {
    flex: 1;
    border-bottom: 0;
}

.dock-title {
    display: flex;
    justify-content: flex-end;
    align-items: flex-end;
    height: 12px;
    padding: 0 5px 1px 0;
    background: #d4d6dc;
    border-bottom: 1px solid var(--line);
}

.dock-tabs {
    display: flex;
    height: 22px;
    background: var(--panel);
    border-bottom: 1px solid var(--line);
}

.dock-tabs button {
    width: 65px;
    border-right: 1px solid var(--line);
    background: #e2e2e2;
    color: #808080;
}

.dock-tabs .active {
    background: var(--panel);
    color: #111;
}

.dock-tools {
    display: flex;
    align-items: center;
    gap: 11px;
    height: 30px;
    padding-left: 4px;
    background: var(--panel);
    border-bottom: 1px solid var(--line);
    color: #333;
}

.dock-tools button {
    display: flex;
    align-items: center;
    gap: 3px;
}

.dock-tools svg {
    width: 16px;
    height: 16px;
}

.dock-tools .wide {
    margin-left: 3px;
}

.dock-tools.text-only {
    gap: 14px;
}

.table-wrap {
    background: linear-gradient(var(--panel) 25px, #fff 25px);
}

.dock-layers .table-wrap {
    background: linear-gradient(var(--panel) 21px, #fff 21px);
}

table {
    border-collapse: separate;
    border-spacing: 0;
    table-layout: fixed;
}

th,
td {
    height: 21px;
    padding: 1px 0 0;
    border: solid var(--line);
    border-width: 0 1px 1px 0;
    white-space: nowrap;
    line-height: 16px;
}

th {
    font-weight: normal;
    color: #333;
    border-color: #d4d4d4;
}

td svg {
    margin: 0 auto;
}

.drawings {
    width: 209px;
}

.drawings th {
    height: 25px;
    width: 41px;
}

.drawings th:first-child {
    width: 127px;
}

.drawings td:first-child {
    padding: 0;
}

.drawings td svg {
    width: 12px;
    height: 14px;
}

.drawings td .open {
    width: 16px;
}

.drawings td:last-child {
    padding-left: 3px;
}

.node {
    display: flex;
    align-items: center;
    height: 20px;
    padding-top: 1px;
}

.node.plain {
    padding-left: 3px;
}

.toggle {
    position: relative;
    width: 14px;
    height: 14px;
    margin: 0 5px 2px 1px;
    border: 1px solid #777;
    border-radius: 2px;
}

.toggle::before {
    content: "";
    display: block;
    width: 8px;
    height: 1px;
    margin: 6px 2px;
    background: #222;
}

.toggle::after {
    content: "";
    position: absolute;
    left: 6px;
    top: 13px;
    height: 5px;
    border-left: 1px solid var(--line);
}

.branch {
    position: relative;
    width: 18px;
    height: 21px;
    margin: -1px 4px 0 8px;
    border-left: 1px solid var(--line);
    align-self: flex-start;
}

.branch::after {
    content: "";
    position: absolute;
    top: 10px;
    left: 0;
    width: 17px;
    border-top: 1px solid var(--line);
}

.branch.last {
    height: 11px;
}

.layers {
    width: 278px;
}

.layers th {
    height: 21px;
    width: 51px;
}

.layers th:nth-child(2) {
    width: 36px;
}

.layers th:last-child {
    width: 191px;
}

.layers td:last-child {
    padding-left: 4px;
}

.layers input {
    appearance: none;
    display: block;
    width: 14px;
    height: 14px;
    margin: 0 auto;
    border: 1px solid #777;
    border-radius: 2px;
    background: #fff;
}

.splitter {
    width: 4px;
    flex: none;
    display: flex;
    flex-direction: column;
    justify-content: center;
}

.splitter button {
    height: 100px;
    margin-bottom: -60px;
    background: #5f6b7a;
}

/* --- 绘图区 --- */
.canvas {
    position: relative;
    flex: 1;
    min-width: 0;
    overflow: hidden;
    background: #000;
}

.plan {
    width: 100%;
    height: 100%;
    shape-rendering: crispEdges;
}

.slab {
    fill: #646464;
}

.flow path {
    fill: none;
    stroke: #fff;
}

.flow .bold {
    stroke-width: 2;
}

.flow .tip {
    fill: #fff;
}

.beams {
    fill: none;
    stroke: #2bd42b;
    stroke-width: 4;
}

.beams .thick {
    stroke-width: 5;
}

.marks {
    fill: #8800ff;
}

.axis {
    fill: none;
    stroke: #f00;
}

.axis-faint {
    stroke: #800000;
}

.guide,
.bubbles {
    fill: none;
    stroke: #008000;
}

.labels {
    fill: #fff;
    font-family: "Noto Sans CJK SC", sans-serif;
    font-size: 18px;
    font-weight: 300;
    text-anchor: middle;
}

.ucs {
    fill: #0f0;
    font-size: 12px;
    text-anchor: middle;
}

.view-bar {
    position: absolute;
    top: 0;
    right: 0;
    border-radius: 0 0 0 3px;
    background: #4b4b4b;
}

.view-bar text {
    font-size: 9px;
    fill: #20262d;
}

.bird {
    position: absolute;
    right: 27px;
    bottom: 0;
}

.pointer {
    position: absolute;
    top: 0;
    left: 0;
    pointer-events: none;
    fill: #fb3a38;
}
```
